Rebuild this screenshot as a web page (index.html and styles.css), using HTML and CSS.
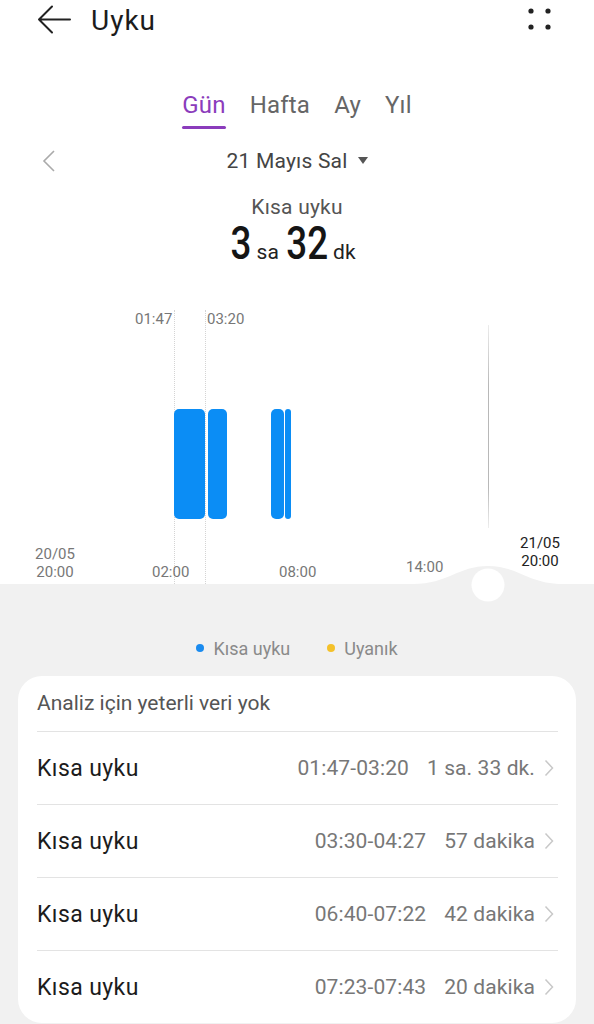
FILE: index.html
```html
<!DOCTYPE html>
<html lang="tr">
<head>
	<meta charset="utf-8" />
	<title>Uyku</title>
	<link rel="stylesheet" href="styles.css">
</head>
<body>
	<div class="top">
		<!-- üst başlık -->
		<div class="header">
			<div class="header-left">
				<svg class="back" width="34" height="30" viewBox="0 0 34 30">
					<path d="M33 14.5H2M15 1.5L2 14.5L15 27.5" fill="none" stroke="#222" stroke-width="2" stroke-linecap="round" stroke-linejoin="round"/>
				</svg>
				<span class="title">Uyku</span>
			</div>
			<svg class="menu" width="26" height="24" viewBox="0 0 26 24">
				<circle cx="4" cy="4" r="2.6" fill="#222"/>
				<circle cx="21" cy="4" r="2.6" fill="#222"/>
				<circle cx="4" cy="20" r="2.6" fill="#222"/>
				<circle cx="21" cy="20" r="2.6" fill="#222"/>
			</svg>
		</div>

		<!-- sekmeler -->
		<div class="tabs">
			<span class="tab on">Gün</span>
			<span class="tab">Hafta</span>
			<span class="tab">Ay</span>
			<span class="tab">Yıl</span>
		</div>

		<div class="date-row">
			<svg class="prev" width="14" height="22" viewBox="0 0 14 22">
				<path d="M12 1L2 11L12 21" fill="none" stroke="#aaa" stroke-width="1.6"/>
			</svg>
			<div class="date">21 Mayıs Sal<i class="caret"></i></div>
			<span></span>
		</div>

		<div class="summary-label">Kısa uyku</div>
		<div class="summary">
			<span class="num one">3</span><span class="unit">sa</span><span class="num two">32</span><span class="unit">dk</span>
		</div>

		<!-- grafik -->
		<div class="chart">
			<span class="mark" style="left: 135px;">01:47</span>
			<span class="mark" style="left: 207px;">03:20</span>
			<i class="vline" style="left: 174px;"></i>
			<i class="vline" style="left: 205px;"></i>
			<i class="now-line"></i>

			<i class="bar" style="left: 174px; width: 31px;"></i>
			<i class="bar" style="left: 208px; width: 19px;"></i>
			<i class="bar" style="left: 271px; width: 13px;"></i>
			<i class="bar" style="left: 285px; width: 6px;"></i>

			<span class="axis two-line" style="left: 35px; top: 278px;">20/05<br>20:00</span>
			<span class="axis" style="left: 152px; top: 296px;">02:00</span>
			<span class="axis" style="left: 279px; top: 296px;">08:00</span>
			<span class="axis" style="left: 406px; top: 291px;">14:00</span>
			<span class="axis two-line dark" style="left: 520px; top: 267px;">21/05<br>20:00</span>

			<svg class="hump" width="150" height="40" viewBox="0 0 150 40">
				<path d="M0 20C35 20 45 2 75 2C105 2 115 20 150 20V40H0Z" fill="#f1f1f1"/>
				<circle cx="75" cy="21" r="16.5" fill="#fff"/>
			</svg>
		</div>
	</div>

	<div class="bottom">
		<div class="legend">
			<span class="dot blue"></span><span class="legend-text">Kısa uyku</span>
			<span class="dot yellow"></span><span class="legend-text">Uyanık</span>
		</div>

		<div class="card">
			<div class="card-head">Analiz için yeterli veri yok</div>
			<div class="row">
				<span class="row-name">Kısa uyku</span>
				<span class="row-time">01:47-03:20</span>
				<span class="row-len">1 sa. 33 dk.</span>
				<svg class="arrow" width="10" height="18" viewBox="0 0 10 18"><path d="M1.5 1.5L8.5 9L1.5 16.5" fill="none" stroke="#c8c8c8" stroke-width="1.5"/></svg>
			</div>
			<div class="row">
				<span class="row-name">Kısa uyku</span>
				<span class="row-time">03:30-04:27</span>
				<span class="row-len">57 dakika</span>
				<svg class="arrow" width="10" height="18" viewBox="0 0 10 18"><path d="M1.5 1.5L8.5 9L1.5 16.5" fill="none" stroke="#c8c8c8" stroke-width="1.5"/></svg>
			</div>
			<div class="row">
				<span class="row-name">Kısa uyku</span>
				<span class="row-time">06:40-07:22</span>
				<span class="row-len">42 dakika</span>
				<svg class="arrow" width="10" height="18" viewBox="0 0 10 18"><path d="M1.5 1.5L8.5 9L1.5 16.5" fill="none" stroke="#c8c8c8" stroke-width="1.5"/></svg>
			</div>
			<div class="row">
				<span class="row-name">Kısa uyku</span>
				<span class="row-time">07:23-07:43</span>
				<span class="row-len">20 dakika</span>
				<svg class="arrow" width="10" height="18" viewBox="0 0 10 18"><path d="M1.5 1.5L8.5 9L1.5 16.5" fill="none" stroke="#c8c8c8" stroke-width="1.5"/></svg>
			</div>
		</div>
	</div>
</body>
</html>
```

FILE: styles.css
```css
* {
	margin: 0;
	padding: 0;
	box-sizing: border-box;
}

body {
	font-family: Roboto, "Noto Sans", "Liberation Sans", sans-serif;
	color: #222;
	background: #f1f1f1;
	width: 594px;
	overflow: hidden;
}

.top {
	background: #fff;
}

.header {
	height: 40px;
	display: flex;
	align-items: center;
	justify-content: space-between;
	padding: 0 41px 0 37px;
}

.header-left {
	display: flex;
	align-items: center;
}

.back {
	display: block;
}

.title {
	margin-left: 20px;
	font-size: 28px;
	letter-spacing: 1px;
	color: #1c1c1c;
	line-height: 32px;
	margin-top: 2px;
}

.menu {
	display: block;
	margin-top: -2px;
}

.tabs {
	margin-top: 45px;
	display: flex;
	justify-content: center;
	gap: 24px;
	height: 44px;
}

.tab {
	font-size: 24px;
	letter-spacing: 0.2px;
	line-height: 40px;
	color: #666;
	height: 44px;
	position: relative;
}

.tab.on {
	color: #8b3cbc;
}

/* tab altındaki mor çizgi */
.tab.on::after {
	content: "";
	position: absolute;
	left: 0;
	right: 0;
	bottom: 0;
	height: 3px;
	border-radius: 2px;
	background: #8b3cbc;
}

.date-row {
	margin-top: 16px;
	height: 32px;
	display: grid;
	grid-template-columns: 1fr auto 1fr;
	align-items: center;
	padding: 0 42px;
}

.prev {
	display: block;
}

.date {
	font-size: 21px;
	letter-spacing: 0.2px;
	color: #444;
	display: flex;
	align-items: center;
}

.caret {
	display: inline-block;
	margin-left: 10px;
	margin-top: -2px;
	border-left: 5px solid transparent;
	border-right: 5px solid transparent;
	border-top: 7px solid #555;
}

.summary-label {
	margin-top: 18px;
	text-align: center;
	font-size: 21px;
	letter-spacing: 0.2px;
	line-height: 24px;
	color: #555;
}

.summary {
	height: 48px;
	line-height: 48px;
	display: flex;
	justify-content: center;
	align-items: baseline;
}

.num {
	display: inline-block;
	font-size: 46px;
	font-weight: 500;
	color: #151515;
	transform: scaleX(0.8);
}

.num.one {
	margin: 0 -3px;
}

.num.two {
	margin: 0 -5px;
}

.unit {
	font-size: 21px;
	color: #222;
	margin: 0 7px 0 5px;
}

/* 睡眠图 */
.chart {
	position: relative;
	height: 317px;
}

.mark {
	position: absolute;
	top: 43px;
	font-size: 15px;
	line-height: 18px;
	color: #777;
}

.vline {
	position: absolute;
	top: 43px;
	bottom: 0;
	border-left: 1px dotted #d4d4d4;
}

.now-line {
	position: absolute;
	left: 488px;
	top: 58px;
	height: 203px;
	width: 1px;
	background: linear-gradient(#ececec, #b8b8b8 30%, #b8b8b8 80%, #eee);
}

.bar {
	position: absolute;
	top: 142px;
	height: 110px;
	background: #0b8df5;
	border-radius: 5px;
}

.axis {
	position: absolute;
	font-size: 15px;
	line-height: 18px;
	color: #777;
}

.two-line {
	width: 40px;
	text-align: center;
}

.axis.dark {
	color: #222;
}

.hump {
	position: absolute;
	left: 413px;
	bottom: -20px;
	display: block;
}

.bottom {
	padding: 54px 0 2px;
}

.legend {
	height: 20px;
	display: flex;
	align-items: center;
	justify-content: center;
	font-size: 18px;
	color: #8a8a8a;
}

.dot {
	width: 8px;
	height: 8px;
	border-radius: 50%;
	margin-right: 9px;
}

.dot.blue {
	background: #1a8bef;
}

.dot.yellow {
	background: #f4c12a;
	margin-left: 37px;
}

.card {
	margin: 18px 18px 0;
	background: #fff;
	border-radius: 24px;
	padding: 0 18px 0 19px;
}

.card-head {
	height: 56px;
	line-height: 54px;
	font-size: 21px;
	color: #555;
	border-bottom: 1px solid #e3e3e3;
}

.row {
	height: 73px;
	display: flex;
	align-items: center;
	border-bottom: 1px solid #e3e3e3;
}

.row:last-child {
	border-bottom: none;
	height: 72px;
}

.row-name {
	font-size: 23px;
	letter-spacing: 0.4px;
	color: #1c1c1c;
	flex: 1;
}

.row-time,
.row-len {
	font-size: 21px;
	letter-spacing: 0.1px;
	color: #777;
}

.row-len {
	margin-left: 18px;
}

.arrow {
	display: block;
	margin-left: 9px;
	margin-right: 4px;
}
```
